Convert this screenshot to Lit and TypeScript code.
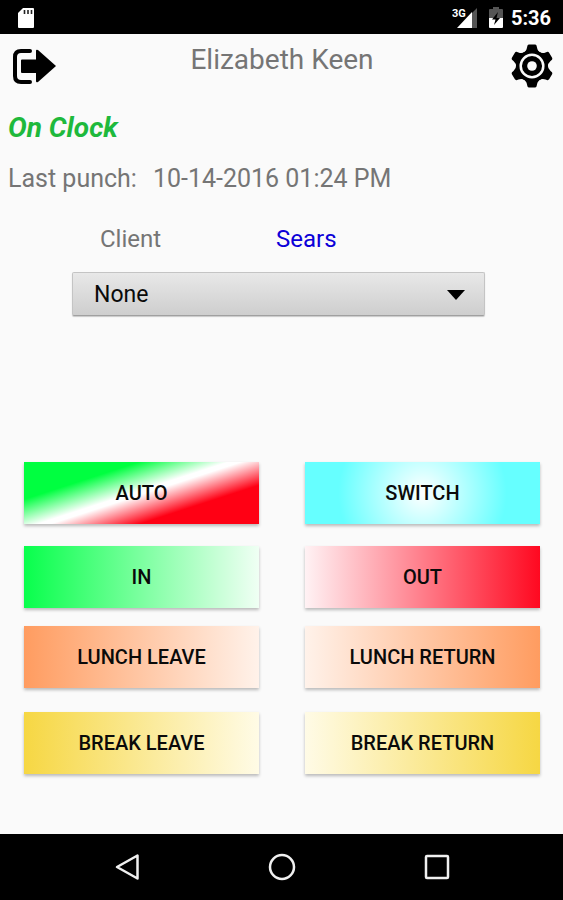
import { LitElement, html, css, svg } from "lit";
import { customElement, property, state } from "lit/decorators.js";

interface PunchAction {
  label: string;
  tone: string;
}

const ROWS: { group: string; actions: PunchAction[] }[] = [
  { group: "auto", actions: [{ label: "AUTO", tone: "auto" }, { label: "SWITCH", tone: "switch" }] },
  { group: "shift", actions: [{ label: "IN", tone: "in" }, { label: "OUT", tone: "out" }] },
  { group: "lunch", actions: [{ label: "LUNCH LEAVE", tone: "lunch-leave" }, { label: "LUNCH RETURN", tone: "lunch-return" }] },
  { group: "break", actions: [{ label: "BREAK LEAVE", tone: "break-leave" }, { label: "BREAK RETURN", tone: "break-return" }] },
];

@customElement("status-bar")
class StatusBar extends LitElement {
  static styles = css`
    :host {
      display: flex;
      align-items: center;
      height: 34px;
      box-sizing: border-box;
      padding: 0 12px 0 16px;
      background: #000;
      color: #fff;
      font: 700 20px/24px Roboto, sans-serif;
    }
    .spacer {
      flex: 1;
    }
    .signal {
      margin-right: 10px;
    }
    .battery {
      margin-right: 7px;
    }
    .network {
      font: 700 11px Roboto, sans-serif;
      fill: #fff;
    }
    svg {
      display: block;
    }
    .time {
      padding-top: 2px;
    }
  `;
  render() {
    return html`
      <svg width="20" height="24" viewBox="0 0 20 24" aria-hidden="true">
        <path d="M7 3h10q1 0 1 1v18q0 1-1 1H3q-1 0-1-1V8z" fill="#fff" />
        <path d="M8.500 5v4M12 5v4M15.500 5v4" stroke="#222" stroke-width="1.600" />
      </svg>
      <span class="spacer"></span>
      <svg class="signal" width="26" height="24" viewBox="0 0 26 24" role="img" aria-label="3G signal">
        <path d="M25 3v20h-5V8z" fill="#555" />
        <path d="M20 7v16H5z" fill="#fff" />
        <text class="network" x="0" y="12">3G</text>
      </svg>
      <svg class="battery" width="16" height="24" viewBox="0 0 16 24" role="img" aria-label="Battery charging">
        <path d="M5 2h6v2h3q1 0 1 1v8H1V5q0-1 1-1h3z" fill="#555" />
        <path d="M1 13h14v9q0 1-1 1H2q-1 0-1-1z" fill="#fff" />
        <path d="M10 7 4 14.500h3.500L6 20l6-7H8.500z" fill="#000" />
      </svg>
      <span class="time">5:36</span>
    `;
  }
}

@customElement("nav-bar")
class NavBar extends LitElement {
  static styles = css`
    :host {
      display: flex;
      justify-content: center;
      gap: 107px;
      height: 66px;
      background: #000;
    }
    button {
      display: grid;
      place-items: center;
      width: 48px;
      padding: 0;
      border: 0;
      background: none;
      cursor: pointer;
    }
    svg {
      fill: none;
      stroke: #f0f0f0;
      stroke-width: 2.5;
      stroke-linejoin: round;
    }
  `;
  private key(label: string, shape: unknown) {
    return html`<button aria-label=${label}><svg width="30" height="30" viewBox="0 0 30 30">${shape}</svg></button>`;
  }
  render() {
    return html`
      ${this.key("Back", svg`<path d="M5 15 25.500 3.500v23z" />`)}
      ${this.key("Home", svg`<circle cx="15" cy="15" r="12" />`)}
      ${this.key("Recent apps", svg`<rect x="4" y="4" width="22" height="22" rx="1" />`)}
    `;
  }
}

@customElement("punch-button")
class PunchButton extends LitElement {
  @property() label = "";
  @property() tone = "";
  static styles = css`
    :host {
      display: block;
    }
    button {
      display: block;
      width: 100%;
      height: 62px;
      padding: 0;
      border: 0;
      color: #0a0a0a;
      font: 500 20px/24px Roboto, sans-serif;
      box-shadow: 0 2px 3px rgba(0, 0, 0, 0.26);
      cursor: pointer;
    }
    .auto {
      background: linear-gradient(162deg, #00ff40 27%, #fff 48%, #fff 51%, #ff0014 72%);
    }
    .switch {
      background: radial-gradient(circle 84px, #fff, #66ffff);
    }
    .in {
      background: linear-gradient(to right, #08ff4c, #f0fff4);
    }
    .out {
      background: linear-gradient(to left, #ff0820, #fff2f4);
    }
    .lunch-leave {
      background: linear-gradient(to right, #ff9c60, #fff2ea);
    }
    .lunch-return {
      background: linear-gradient(to left, #ff9c60, #fff2ea);
    }
    .break-leave {
      background: linear-gradient(to right, #f6d743, #fffbe6);
    }
    .break-return {
      background: linear-gradient(to left, #f6d743, #fffbe6);
    }
  `;
  render() {
    return html`<button class=${this.tone}>${this.label}</button>`;
  }
}

@customElement("app-root")
class AppRoot extends LitElement {
  @state() private client = "None";

  static styles = css`
    :host {
      display: flex;
      flex-direction: column;
      min-height: 100vh;
      background: #fafafa;
      color: #757575;
      font: 400 25px/32px Roboto, sans-serif;
    }
    header {
      display: flex;
      justify-content: space-between;
      padding: 8px 7px 0 8px;
    }
    .icon {
      display: block;
      padding: 0;
      border: 0;
      background: none;
      color: #000;
      cursor: pointer;
    }
    .icon svg {
      display: block;
    }
    h1 {
      margin: 0;
      font-size: 28px;
      line-height: 36px;
      font-weight: 400;
    }
    main {
      flex: 1;
      display: flex;
      flex-direction: column;
      padding-bottom: 60px;
    }
    .status {
      margin: 22px 8px 0;
      color: #1eb93c;
      font-size: 28px;
      font-weight: 700;
      font-style: italic;
    }
    .last {
      display: flex;
      gap: 16px;
      margin: 19px 8px 0;
    }
    .client {
      display: grid;
      grid-template-columns: 176px 1fr;
      margin: 28px 78px 0 100px;
      font-size: 24px;
    }
    .current {
      color: #0c00d8;
    }
    .picker {
      position: relative;
      margin: 17px 78px 0 72px;
    }
    select {
      display: block;
      width: 100%;
      height: 44px;
      padding: 2px 21px 0;
      border: 1px solid #c4c4c4;
      border-bottom-color: #a0a0a0;
      border-radius: 2px;
      appearance: none;
      background: linear-gradient(#e8e8e8, #cecece);
      box-shadow: 0 1px 1px rgba(0, 0, 0, 0.2);
      color: #0a0a0a;
      font: 400 23px/32px Roboto, sans-serif;
    }
    .caret {
      position: absolute;
      right: 20px;
      top: 18px;
      pointer-events: none;
    }
    .actions {
      margin: auto 23px 0 24px;
    }
    .row {
      display: grid;
      grid-template-columns: 1fr 1fr;
      gap: 46px;
    }
    .shift {
      margin-top: 22px;
    }
    .lunch {
      margin-top: 18px;
    }
    .break {
      margin-top: 24px;
    }
  `;

  render() {
    return html`
      <status-bar></status-bar>
      <header>
        <button class="icon" aria-label="Sign out">
          <svg width="48" height="48" viewBox="0 0 48 48" aria-hidden="true">
            <path d="M22 9H13Q7 9 7 15V34Q7 40 13 40H22" fill="none" stroke="#000" stroke-width="4" stroke-linecap="round" />
            <path d="M14 17.500H28V9q0-2 2-1L48 24 30 40q-2 1-2-1V31H14q-1 0-1-1V18.500q0-1 1-1z" fill="#000" />
          </svg>
        </button>
        <h1>Elizabeth Keen</h1>
        <button class="icon" aria-label="Settings">
          <svg width="48" height="48" viewBox="-24 -24 48 48" aria-hidden="true">
            <g fill="#000">
              <circle r="16" />
              ${[0, 60, 120, 180, 240, 300].map(
                (a) => svg`<path transform="rotate(${a})" d="M-9-13Q-5.500-15-5-18.500L-4.500-20.500Q-4-21.500-3-21.500H3Q4-21.500 4.500-20.500L5-18.500Q5.500-15 9-13z" />`
              )}
            </g>
            <circle r="11.300" fill="none" stroke="#fafafa" stroke-width="2.500" />
            <circle r="4.800" fill="#fafafa" />
          </svg>
        </button>
      </header>
      <main>
        <div class="status">On Clock</div>
        <div class="last"><span>Last punch:</span><span>10-14-2016 01:24 PM</span></div>
        <div class="client"><label for="client">Client</label><span class="current">Sears</span></div>
        <div class="picker">
          <select id="client" .value=${this.client} @change=${(e: Event) => (this.client = (e.target as HTMLSelectElement).value)}>
            <option>None</option>
            <option>Sears</option>
          </select>
          <svg class="caret" width="18" height="10" viewBox="0 0 18 10" aria-hidden="true"><path d="M0 0h18L9 10z" fill="#000" /></svg>
        </div>
        <div class="actions">
          ${ROWS.map(
            (row) => html`<div class="row ${row.group}">
              ${row.actions.map((a) => html`<punch-button .label=${a.label} .tone=${a.tone}></punch-button>`)}
            </div>`
          )}
        </div>
      </main>
      <nav-bar></nav-bar>
    `;
  }
}
